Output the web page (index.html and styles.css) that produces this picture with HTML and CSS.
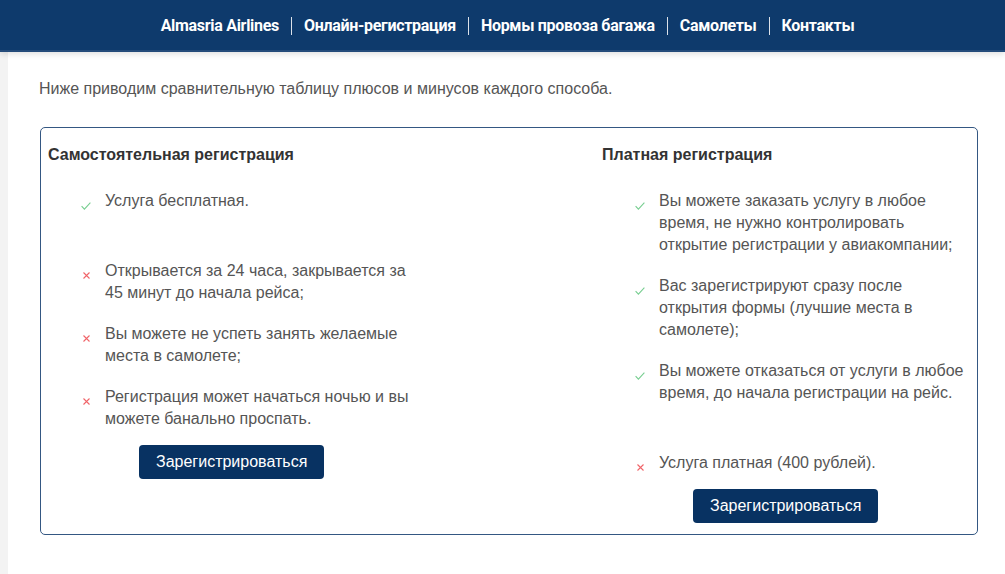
FILE: index.html
```html
<!DOCTYPE html>
<html lang="ru">
	<head>
		<meta charset="utf-8">
		<title>Онлайн-регистрация</title>
		<link rel="stylesheet" href="styles.css">
	</head>
	<body>
		<header class="topbar">
			<nav class="nav">
				<a href="#">Almasria Airlines</a>
				<a href="#">Онлайн-регистрация</a>
				<a href="#">Нормы провоза багажа</a>
				<a href="#">Самолеты</a>
				<a href="#">Контакты</a>
			</nav>
		</header>
		<main class="page">
			<p class="intro">Ниже приводим сравнительную таблицу плюсов и минусов каждого способа.</p>
			<div class="compare">
				<div class="col">
					<h3>Самостоятельная регистрация</h3>
					<ul class="list">
						<li><svg class="ico ok" viewBox="0 0 10 8"><path d="M0.6 4.2 L3.4 7.2 L9.4 0.7"/></svg>Услуга бесплатная.</li>
					</ul>
					<ul class="list">
						<li><svg class="ico no" viewBox="0 0 7 7"><path d="M0.5 0.5 L6.5 6.5 M6.5 0.5 L0.5 6.5"/></svg>Открывается за 24 часа, закрывается за 45 минут до начала рейса;</li>
						<li><svg class="ico no" viewBox="0 0 7 7"><path d="M0.5 0.5 L6.5 6.5 M6.5 0.5 L0.5 6.5"/></svg>Вы можете не успеть занять желаемые места в самолете;</li>
						<li><svg class="ico no" viewBox="0 0 7 7"><path d="M0.5 0.5 L6.5 6.5 M6.5 0.5 L0.5 6.5"/></svg>Регистрация может начаться ночью и вы можете банально проспать.</li>
					</ul>
					<button class="btn">Зарегистрироваться</button>
				</div>
				<div class="col">
					<h3>Платная регистрация</h3>
					<ul class="list">
						<li><svg class="ico ok" viewBox="0 0 10 8"><path d="M0.6 4.2 L3.4 7.2 L9.4 0.7"/></svg>Вы можете заказать услугу в любое время, не нужно контролировать открытие регистрации у авиакомпании;</li>
						<li><svg class="ico ok" viewBox="0 0 10 8"><path d="M0.6 4.2 L3.4 7.2 L9.4 0.7"/></svg>Вас зарегистрируют сразу после открытия формы (лучшие места в самолете);</li>
						<li><svg class="ico ok" viewBox="0 0 10 8"><path d="M0.6 4.2 L3.4 7.2 L9.4 0.7"/></svg>Вы можете отказаться от услуги в любое время, до начала регистрации на рейс.</li>
					</ul>
					<ul class="list">
						<li><svg class="ico no" viewBox="0 0 7 7"><path d="M0.5 0.5 L6.5 6.5 M6.5 0.5 L0.5 6.5"/></svg>Услуга платная (400 рублей).</li>
					</ul>
					<button class="btn">Зарегистрироваться</button>
				</div>
			</div>
		</main>
	</body>
</html>
```
FILE: styles.css
```css
:root {
	--navy: rgb(14, 58, 108);
	--btn: rgb(8, 50, 98);
	--text: rgb(85, 85, 85);
	--head: rgb(51, 51, 51);
	--frame: rgb(52, 87, 130);
}
html, body {
	margin: 0;
	padding: 0;
}
body {
	background-color: rgb(243, 243, 243);
	font-family: "Liberation Sans", Arial, sans-serif;
	font-size: 16px;
	color: var(--text);
	height: 574px;
	overflow: hidden;
}
.topbar {
	position: relative;
	z-index: 1;
	box-sizing: border-box;
	height: 52px;
	padding: 2px 0 0 10px;
	background-color: var(--navy);
	border-bottom: 2px solid rgb(36, 75, 122);
	box-shadow: 0 2px 6px rgba(0, 0, 0, 0.13);
	display: flex;
	align-items: center;
	justify-content: center;
}
.nav {
	display: flex;
	align-items: center;
}
.nav a {
	color: #fff;
	text-decoration: none;
	font-family: Roboto, "Liberation Sans", sans-serif;
	font-weight: 700;
	font-size: 16px;
	letter-spacing: -0.3px;
	padding: 0 12px;
	line-height: 18px;
	border-left: 1px solid rgba(255, 255, 255, 0.85);
}
.nav a:first-child {
	border-left: 0;
}
.page {
	background-color: #fff;
	margin-left: 8px;
	padding: 26px 27px 0 31px;
	height: 522px;
	box-sizing: border-box;
}
.intro {
	margin: 0 0 27px 0;
	line-height: 22px;
}
.compare {
	border: 1px solid var(--frame);
	border-radius: 5px;
	padding: 16px 8px 11px 7px;
	margin-left: 1px;
	display: grid;
	grid-template-columns: 554px 1fr;
}
.col h3 {
	margin: 0 0 24px 0;
	font-size: 16px;
	font-weight: 700;
	line-height: 22px;
	color: var(--head);
}
.list {
	list-style: none;
	margin: 0;
	padding: 0 0 0 57px;
	display: flex;
	flex-direction: column;
	gap: 19px;
}
.list + .list {
	margin-top: 48px;
}
.list li {
	position: relative;
	max-width: 311px;
	line-height: 22px;
}
.ico {
	position: absolute;
	top: 12px;
	fill: none;
	stroke-width: 1.1;
}
.ok {
	left: -24px;
	width: 10px;
	height: 8px;
	stroke: rgb(120, 206, 145);
}
.no {
	left: -22px;
	width: 7px;
	height: 7px;
	stroke: rgb(240, 100, 105);
}
.btn {
	display: block;
	margin: 15px 0 0 91px;
	height: 34px;
	padding: 0 17px;
	border: 0;
	border-radius: 4px;
	background-color: var(--btn);
	color: #fff;
	font-family: "Liberation Sans", Arial, sans-serif;
	font-size: 16px;
}
```
